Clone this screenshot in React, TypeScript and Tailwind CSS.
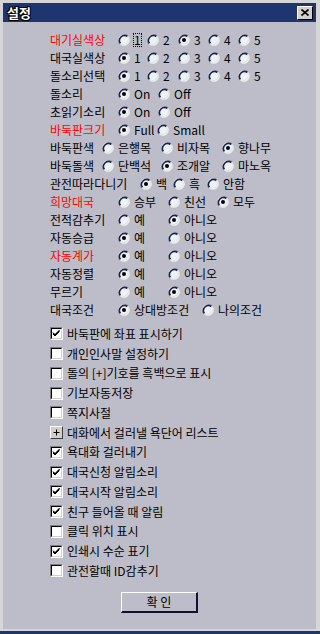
import React from "react";

type Opt = { text: string; w?: number; focus?: boolean };
type Row = { label: string; red?: boolean; lw: number; opts: Opt[]; sel: number };

const rows: Row[] = [
  { label: "대기실색상", red: true, lw: 68, sel: 2, opts: [{ text: "1", w: 29, focus: true }, { text: "2", w: 31 }, { text: "3", w: 30 }, { text: "4", w: 30 }, { text: "5" }] },
  { label: "대국실색상", lw: 68, sel: 0, opts: [{ text: "1", w: 29 }, { text: "2", w: 31 }, { text: "3", w: 30 }, { text: "4", w: 30 }, { text: "5" }] },
  { label: "돌소리선택", lw: 68, sel: 0, opts: [{ text: "1", w: 29 }, { text: "2", w: 31 }, { text: "3", w: 30 }, { text: "4", w: 30 }, { text: "5" }] },
  { label: "돌소리", lw: 68, sel: 0, opts: [{ text: "On", w: 40 }, { text: "Off" }] },
  { label: "초읽기소리", lw: 68, sel: 0, opts: [{ text: "On", w: 40 }, { text: "Off" }] },
  { label: "바둑판크기", red: true, lw: 68, sel: 0, opts: [{ text: "Full", w: 39 }, { text: "Small" }] },
  { label: "바둑판색", lw: 52, sel: 2, opts: [{ text: "은행목", w: 59 }, { text: "비자목", w: 61 }, { text: "향나무" }] },
  { label: "바둑돌색", lw: 52, sel: 1, opts: [{ text: "단백석", w: 59 }, { text: "조개알", w: 61 }, { text: "마노옥" }] },
  { label: "관전따라다니기", lw: 90, sel: 0, opts: [{ text: "백", w: 33 }, { text: "흑", w: 34 }, { text: "안함" }] },
  { label: "희망대국", red: true, lw: 68, sel: 2, opts: [{ text: "승부", w: 50 }, { text: "친선", w: 49 }, { text: "모두" }] },
  { label: "전적감추기", lw: 68, sel: 1, opts: [{ text: "예", w: 50 }, { text: "아니오" }] },
  { label: "자동승급", lw: 68, sel: 0, opts: [{ text: "예", w: 50 }, { text: "아니오" }] },
  { label: "자동계가", red: true, lw: 68, sel: 0, opts: [{ text: "예", w: 50 }, { text: "아니오" }] },
  { label: "자동정렬", lw: 68, sel: 0, opts: [{ text: "예", w: 50 }, { text: "아니오" }] },
  { label: "무르기", lw: 68, sel: 1, opts: [{ text: "예", w: 50 }, { text: "아니오" }] },
  { label: "대국조건", lw: 68, sel: 0, opts: [{ text: "상대방조건", w: 84 }, { text: "나의조건" }] },
];

const checks: { text: string; on?: boolean; plus?: boolean }[] = [
  { text: "바둑판에 좌표 표시하기", on: true },
  { text: "개인인사말 설정하기" },
  { text: "돌의 [+]기호를 흑백으로 표시" },
  { text: "기보자동저장" },
  { text: "쪽지사절" },
  { text: "대화에서 걸러낼 욕단어 리스트", plus: true },
  { text: "욕대화 걸러내기", on: true },
  { text: "대국신청 알림소리", on: true },
  { text: "대국시작 알림소리", on: true },
  { text: "친구 들어올 때 알림", on: true },
  { text: "클릭 위치 표시" },
  { text: "인쇄시 수순 표기", on: true },
  { text: "관전할때 ID감추기" },
];

const Radio = ({ on }: { on: boolean }) => (
  <svg width="12" height="12" viewBox="0 0 12 12" className="shrink-0">
    <path d="M10.2 1.8 A6 6 0 0 0 1.8 10.2" fill="none" stroke="#7f7f8c" strokeWidth="1" />
    <circle cx="6" cy="6" r="5.5" fill="#eef3f2" stroke="#eef3f2" strokeWidth="0.5" />
    <path d="M9.5 2.5 A5 5 0 0 0 2.5 9.5" fill="none" stroke="#1c2050" strokeWidth="1.6" />
    <path d="M2.5 9.5 A5 5 0 0 0 9.5 2.5" fill="none" stroke="#dfe4e4" strokeWidth="1" />
    {on && <circle cx="6" cy="6" r="2" fill="#000" />}
  </svg>
);

const Check = ({ on }: { on?: boolean }) => (
  <div className="w-[13px] h-[13px] shrink-0 border-t border-l border-t-[#808080] border-l-[#808080] border-b border-r border-b-white border-r-white">
    <div className="w-full h-full bg-white border-t border-l border-t-black border-l-black border-b border-r border-b-[#d4d0c8] border-r-[#d4d0c8]">
      {on && (
        <svg width="9" height="9" viewBox="0 0 9 9">
          <path d="M1 4 L3 6 L7.5 1.5 M1 5 L3 7 L7.5 2.5 M1 3.5 L3 5.5 L7.5 1" stroke="#000" strokeWidth="1" fill="none" />
        </svg>
      )}
    </div>
  </div>
);

const App = () => {
  return (
    <div
      className="w-[320px] h-[634px] bg-[#d6d6d6] flex flex-col overflow-hidden text-[12px] text-black"
      style={{ fontFamily: '"Noto Sans CJK KR", "Noto Sans", sans-serif' }}
    >
      <div className="h-[3px] bg-[#d6d6d6]" />
      <div className="mx-[3px] mr-[4px] h-[19px] bg-[#1f3570] flex items-center justify-between pl-[3px] pr-[3px]">
        <span className="text-white font-bold text-[13px] leading-none px-[1px] [text-shadow:1px_1px_0_#000,-1px_-1px_0_#000,1px_-1px_0_#000,-1px_1px_0_#000]">설정</span>
        <div className="w-[16px] h-[14px] bg-[#d4d0c8] border border-t-white border-l-white border-b-black border-r-black flex items-center justify-center">
          <svg width="8" height="7" viewBox="0 0 8 7">
            <path d="M0.5 0.5 L7.5 6.5 M7.5 0.5 L0.5 6.5" stroke="#000" strokeWidth="1.6" />
          </svg>
        </div>
      </div>
      <div className="mx-[3px] mr-[4px] flex-1 bg-[#bdbdc9] flex flex-col pt-[9px] pl-[47px]">
        {rows.map((r) => (
          <div key={r.label} className="h-[18px] flex items-center">
            <span className={`shrink-0 leading-none ${r.red ? "text-[#ff0000]" : "text-black"}`} style={{ width: r.lw }}>
              {r.label}
            </span>
            {r.opts.map((o, i) => (
              <div key={o.text} className="flex items-center gap-[4px] shrink-0" style={o.w ? { width: o.w } : undefined}>
                <Radio on={i === r.sel} />
                <span className={`leading-none ${o.focus ? "outline-1 outline-dotted outline-black" : ""}`}>{o.text}</span>
              </div>
            ))}
          </div>
        ))}
        <div className="h-[5px]" />
        {checks.map((c) => (
          <div key={c.text} className="h-[19.75px] flex items-center gap-[4px]">
            {c.plus ? (
              <div className="w-[13px] h-[13px] shrink-0 bg-[#d4d0c8] border border-t-white border-l-white border-b-[#404040] border-r-[#404040] flex items-center justify-center">
                <svg width="7" height="7" viewBox="0 0 7 7">
                  <path d="M3.5 0.5 V6.5 M0.5 3.5 H6.5" stroke="#000" strokeWidth="1" />
                </svg>
              </div>
            ) : (
              <Check on={c.on} />
            )}
            <span className="leading-none">{c.text}</span>
          </div>
        ))}
        <div className="flex justify-center mt-[11px] pr-[47px]">
          <div className="w-[77px] h-[21px] bg-[#bdbdc9] border-t border-l border-t-white border-l-white border-b-2 border-r-2 border-b-[#101030] border-r-[#101030] flex items-center justify-center">
            <span className="leading-none">확 인</span>
          </div>
        </div>
      </div>
      <div className="h-[2px] bg-[#d6d6d6]" />
      <div className="h-[3px] bg-[#1f3570]" />
    </div>
  );
};

export default App;
